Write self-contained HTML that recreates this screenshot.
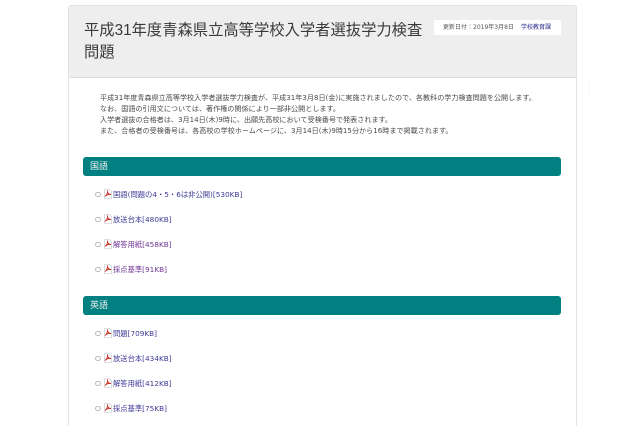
<!DOCTYPE html>
<html lang="ja"><head><meta charset="utf-8">
<style>
html,body{margin:0;padding:0;background:#fff;width:640px;height:426px;overflow:hidden}
body{position:relative;font-family:"Liberation Sans","Noto Sans CJK JP",sans-serif;color:#333}
#wrap{position:absolute;left:0;top:0;width:640px;height:426px;overflow:hidden;filter:blur(.3px)}
.abs{position:absolute;white-space:nowrap}
#card{position:absolute;left:68px;top:5px;width:507px;height:421px;border:1px solid #e3e3e3;border-bottom:0;border-radius:3px 3px 0 0;background:#fff}
#hd{position:absolute;left:69px;top:6px;width:507px;height:71px;background:#eeeeee;border-bottom:1px solid #dcdcdc}
#title{position:absolute;left:84px;top:20px;font-size:15.3px;line-height:22px;width:345px;color:#3a3a3a}
#upd{position:absolute;left:434px;top:20px;width:127px;height:15px;background:#fff;border-radius:1px}
#upd span{position:absolute;top:0;font-size:6px;line-height:16px;white-space:nowrap;font-family:"DejaVu Sans","Noto Sans CJK JP",sans-serif;color:#555}
.p{left:100px;font-family:"DejaVu Sans","Noto Sans CJK JP",sans-serif;font-size:7.1px;line-height:11px;color:#4a4a4a}
.bar{position:absolute;left:83px;width:478px;height:19px;background:#008080;border-radius:3px;color:#f2f2f2;font-size:9px;line-height:18px;text-indent:7px}
.li{position:absolute;left:95px;height:14px;font-family:"DejaVu Sans","Noto Sans CJK JP",sans-serif;font-size:7.3px;line-height:14px;color:#3f3a96;white-space:nowrap}
.li i{position:absolute;left:0;top:4.500px;width:3.500px;height:3.500px;border:.7px solid #bbb;border-radius:50%}
.li svg{position:absolute;left:9px;top:1.500px}
.li span{position:absolute;left:18px;top:1px}
.v{color:#6f3596}
#mark{position:absolute;left:588px;top:80px;width:1px;height:15px;background:#f3f7f7}
</style></head><body>
<div id="wrap">
<div id="card"></div>
<div id="hd"></div>
<div id="mark"></div>
<div id="title">平成31年度青森県立高等学校入学者選抜学力検査問題</div>
<div id="upd"><span style="left:9px">更新日付：2019年3月8日</span><span style="left:87px;color:#2a2a8c">学校教育課</span></div>
<div class="abs p" style="top:92px">平成31年度青森県立高等学校入学者選抜学力検査が、平成31年3月8日(金)に実施されましたので、各教科の学力検査問題を公開します。</div>
<div class="abs p" style="top:103px">なお、国語の引用文については、著作権の関係により一部非公開とします。</div>
<div class="abs p" style="top:114px">入学者選抜の合格者は、3月14日(木)9時に、出願先高校において受検番号で発表されます。</div>
<div class="abs p" style="top:125px">また、合格者の受検番号は、各高校の学校ホームページに、3月14日(木)9時15分から16時まで掲載されます。</div>

<div class="bar" style="top:157px">国語</div>
<div class="li" style="top:187px"><i></i><svg width="8" height="10" viewBox="0 0 8 10"><path d="M.5.5H5.500L7.500 2.500V9.500H.5Z" fill="#fff" stroke="#c4c4c4" stroke-width=".6"/><path d="M1 7.500C2.500 6.500 4 3.500 3.600 1.500 3.200 3.500 4.500 5.500 7 5.500 5.500 5 2.500 5.500 1 7.500Z" fill="none" stroke="#c8261e" stroke-width=".9"/></svg><span>国語(問題の4・5・6は非公開)[530KB]</span></div>
<div class="li" style="top:212px"><i></i><svg width="8" height="10" viewBox="0 0 8 10"><path d="M.5.5H5.500L7.500 2.500V9.500H.5Z" fill="#fff" stroke="#c4c4c4" stroke-width=".6"/><path d="M1 7.500C2.500 6.500 4 3.500 3.600 1.500 3.200 3.500 4.500 5.500 7 5.500 5.500 5 2.500 5.500 1 7.500Z" fill="none" stroke="#c8261e" stroke-width=".9"/></svg><span>放送台本[480KB]</span></div>
<div class="li" style="top:237px"><i></i><svg width="8" height="10" viewBox="0 0 8 10"><path d="M.5.5H5.500L7.500 2.500V9.500H.5Z" fill="#fff" stroke="#c4c4c4" stroke-width=".6"/><path d="M1 7.500C2.500 6.500 4 3.500 3.600 1.500 3.200 3.500 4.500 5.500 7 5.500 5.500 5 2.500 5.500 1 7.500Z" fill="none" stroke="#c8261e" stroke-width=".9"/></svg><span class="v">解答用紙[458KB]</span></div>
<div class="li" style="top:262px"><i></i><svg width="8" height="10" viewBox="0 0 8 10"><path d="M.5.5H5.500L7.500 2.500V9.500H.5Z" fill="#fff" stroke="#c4c4c4" stroke-width=".6"/><path d="M1 7.500C2.500 6.500 4 3.500 3.600 1.500 3.200 3.500 4.500 5.500 7 5.500 5.500 5 2.500 5.500 1 7.500Z" fill="none" stroke="#c8261e" stroke-width=".9"/></svg><span class="v">採点基準[91KB]</span></div>

<div class="bar" style="top:296px">英語</div>
<div class="li" style="top:326px"><i></i><svg width="8" height="10" viewBox="0 0 8 10"><path d="M.5.5H5.500L7.500 2.500V9.500H.5Z" fill="#fff" stroke="#c4c4c4" stroke-width=".6"/><path d="M1 7.500C2.500 6.500 4 3.500 3.600 1.500 3.200 3.500 4.500 5.500 7 5.500 5.500 5 2.500 5.500 1 7.500Z" fill="none" stroke="#c8261e" stroke-width=".9"/></svg><span>問題[709KB]</span></div>
<div class="li" style="top:351px"><i></i><svg width="8" height="10" viewBox="0 0 8 10"><path d="M.5.5H5.500L7.500 2.500V9.500H.5Z" fill="#fff" stroke="#c4c4c4" stroke-width=".6"/><path d="M1 7.500C2.500 6.500 4 3.500 3.600 1.500 3.200 3.500 4.500 5.500 7 5.500 5.500 5 2.500 5.500 1 7.500Z" fill="none" stroke="#c8261e" stroke-width=".9"/></svg><span>放送台本[434KB]</span></div>
<div class="li" style="top:376px"><i></i><svg width="8" height="10" viewBox="0 0 8 10"><path d="M.5.5H5.500L7.500 2.500V9.500H.5Z" fill="#fff" stroke="#c4c4c4" stroke-width=".6"/><path d="M1 7.500C2.500 6.500 4 3.500 3.600 1.500 3.200 3.500 4.500 5.500 7 5.500 5.500 5 2.500 5.500 1 7.500Z" fill="none" stroke="#c8261e" stroke-width=".9"/></svg><span>解答用紙[412KB]</span></div>
<div class="li" style="top:401px"><i></i><svg width="8" height="10" viewBox="0 0 8 10"><path d="M.5.5H5.500L7.500 2.500V9.500H.5Z" fill="#fff" stroke="#c4c4c4" stroke-width=".6"/><path d="M1 7.500C2.500 6.500 4 3.500 3.600 1.500 3.200 3.500 4.500 5.500 7 5.500 5.500 5 2.500 5.500 1 7.500Z" fill="none" stroke="#c8261e" stroke-width=".9"/></svg><span>採点基準[75KB]</span></div>
</div>
</body></html>
